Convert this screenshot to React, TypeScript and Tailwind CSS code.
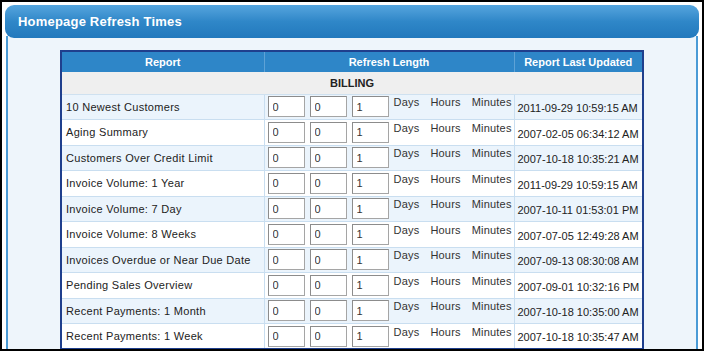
import React from "react";

const rows: { name: string; updated: string }[] = [
  { name: "10 Newest Customers", updated: "2011-09-29 10:59:15 AM" },
  { name: "Aging Summary", updated: "2007-02-05 06:34:12 AM" },
  { name: "Customers Over Credit Limit", updated: "2007-10-18 10:35:21 AM" },
  { name: "Invoice Volume: 1 Year", updated: "2011-09-29 10:59:15 AM" },
  { name: "Invoice Volume: 7 Day", updated: "2007-10-11 01:53:01 PM" },
  { name: "Invoice Volume: 8 Weeks", updated: "2007-07-05 12:49:28 AM" },
  { name: "Invoices Overdue or Near Due Date", updated: "2007-09-13 08:30:08 AM" },
  { name: "Pending Sales Overview", updated: "2007-09-01 10:32:16 PM" },
  { name: "Recent Payments: 1 Month", updated: "2007-10-18 10:35:00 AM" },
  { name: "Recent Payments: 1 Week", updated: "2007-10-18 10:35:47 AM" },
];

const NumBox = ({ value }: { value: string }) => (
  <input
    defaultValue={value}
    className="w-[37px] h-[21px] border border-[#a5a5a5] border-t-[#8c8c8c] border-l-[#8c8c8c] bg-white px-[4px] text-[11px] text-[#333] outline-none"
  />
);

const App = () => {
  return (
    <div
      className="w-[704px] h-[351px] overflow-hidden bg-black p-[2px]"
      style={{ fontFamily: '"Liberation Sans", Arial, sans-serif' }}
    >
      <div className="h-full bg-white pt-[3px] px-[3px] flex flex-col">
        <div className="h-[33px] rounded-[9px] bg-gradient-to-b from-[#55a5de] via-[#2f87c8] to-[#2279bd] flex items-center px-[13px] shrink-0 relative z-10">
          <h1 className="text-white font-bold text-[13px] tracking-[0.2px]">Homepage Refresh Times</h1>
        </div>
        <div className="flex-1 -mt-[2px] mx-[1px] bg-[#eef5fb] border-x-2 border-[#4a9bd6] pt-[14px] flex justify-center overflow-hidden">
          <table className="w-[584px] h-fit border-collapse border-2 border-[#1f3f8d] text-[11px] text-[#222]">
            <thead>
              <tr className="h-[21px] bg-[#2e86c8] text-white font-bold">
                <th className="w-[203px] border-r border-[#5ea2d6] text-center font-bold">Report</th>
                <th className="w-[250px] border-r border-[#5ea2d6] text-center font-bold">Refresh Length</th>
                <th className="text-center font-bold">Report Last Updated</th>
              </tr>
            </thead>
            <tbody>
              <tr className="h-[22px] bg-[#efefef]">
                <td colSpan={3} className="text-center font-bold text-[#222] border-b border-[#cfe1f0]">BILLING</td>
              </tr>
              {rows.map((r, i) => (
                <tr
                  key={r.name}
                  className={`h-[25.5px] border-b border-[#c9def0] ${i % 2 === 0 ? "bg-[#ebf4fc]" : "bg-white"}`}
                >
                  <td className="pl-[4px] border-r border-[#c9def0] whitespace-nowrap tracking-[0.3px]">{r.name}</td>
                  <td className="pl-[3px] border-r border-[#c9def0]">
                    <div className="flex items-start gap-[5px]">
                      <NumBox value="0" />
                      <NumBox value="0" />
                      <NumBox value="1" />
                      <span className="text-[#333] -mt-[1px] leading-[14px] tracking-[0.2px]">Days</span>
                      <span className="text-[#333] ml-[6px] -mt-[1px] leading-[14px] tracking-[0.2px]">Hours</span>
                      <span className="text-[#333] ml-[6px] -mt-[1px] leading-[14px] tracking-[0.2px]">Minutes</span>
                    </div>
                  </td>
                  <td className="pl-[3px] pt-[3px] whitespace-nowrap">{r.updated}</td>
                </tr>
              ))}
            </tbody>
          </table>
        </div>
      </div>
    </div>
  );
};

export default App;
